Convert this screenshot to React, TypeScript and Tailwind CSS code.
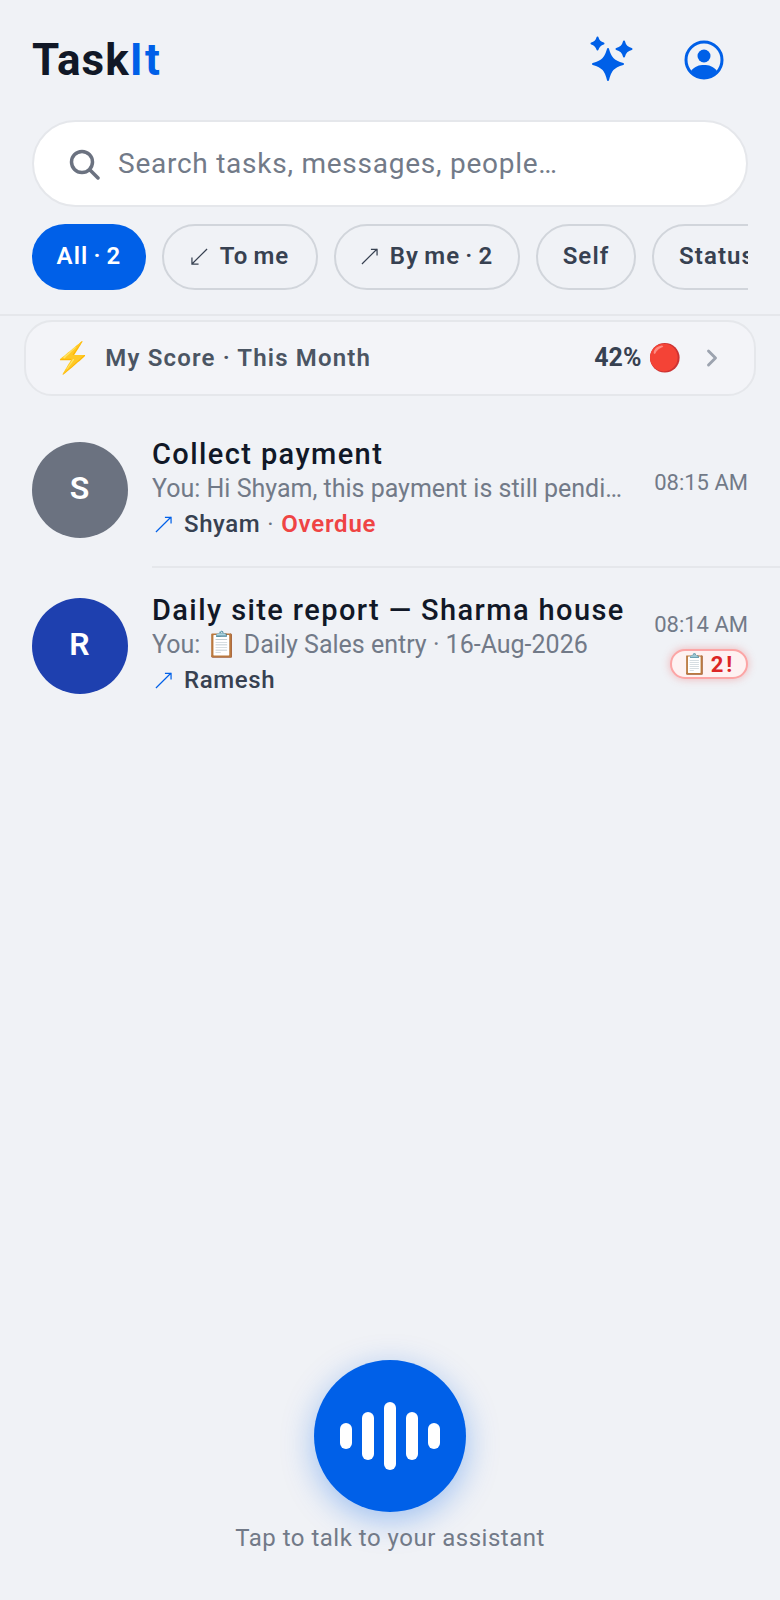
import { ChevronRight } from 'lucide-react'

const font = { fontFamily: 'Roboto, "Noto Color Emoji", sans-serif' }

const tabs = [
  { label: 'All · 2', width: 'w-[114px]', active: true },
  { label: 'To me', arrow: 'in', width: 'w-[156px]' },
  { label: 'By me · 2', arrow: 'out', width: 'w-[186px]' },
  { label: 'Self', width: 'w-[100px]' },
  { label: 'Status', width: 'w-[130px]' },
]

function Arrow({ dir, color }: { dir: string; color: string }) {
  return (
    <svg width="17" height="17" viewBox="0 0 18 18" fill="none" stroke={color} strokeWidth="1.300" className="shrink-0">
      {dir === 'out' ? <path d="M1 17 L17 1 M10.500 1.500 H17 V8" /> : <path d="M17 1 L1 17 M1 10 V17 H8" />}
    </svg>
  )
}

function Sparkles() {
  return (
    <svg width="48" height="48" viewBox="0 0 48 48" fill="#0060e8" stroke="#0060e8" strokeWidth="2" strokeLinejoin="round">
      <path d="M21 13 C23.500 22 26 25 36 28 C26 31 23.500 34 21 44 C18.500 34 16 31 6 28 C16 25 18.500 22 21 13 Z" />
      <path d="M10.500 1.500 C11.500 5 13 6.500 16.500 7.500 C13 8.500 11.500 10 10.500 13.500 C9.500 10 8 8.500 4.500 7.500 C8 6.500 9.500 5 10.500 1.500 Z" />
      <path d="M37 5.500 C38 10 40 12 44.500 13 C40 14 38 16 37 20.500 C36 16 34 14 29.500 13 C34 12 36 10 37 5.500 Z" />
    </svg>
  )
}

function Profile() {
  return (
    <svg width="40" height="40" viewBox="0 0 40 40">
      <circle cx="20" cy="20" r="18" fill="none" stroke="#0060e8" strokeWidth="3" />
      <circle cx="20" cy="16" r="6.500" fill="#0060e8" />
      <path d="M7 31 C11 26 15 25 20 25 C25 25 29 26 33 31 C30 35 25 38 20 38 C15 38 10 35 7 31 Z" fill="#0060e8" />
    </svg>
  )
}

function Row({ initial, color, title, preview, person, overdue, time, badge, last }: {
  initial: string
  color: string
  title: string
  preview: string
  person: string
  overdue?: boolean
  time: string
  badge?: boolean
  last?: boolean
}) {
  return (
    <div className="flex h-[156px] pl-8">
      <div className={`mt-[30px] flex h-[96px] w-[96px] shrink-0 items-center justify-center rounded-full pb-[4px] pr-[1px] text-[32px] font-semibold text-white ${color}`}>
        {initial}
      </div>
      <div className={`ml-6 flex min-w-0 flex-1 pr-8 pt-[23px] ${last ? '' : 'border-b-2 border-[#e5e7eb]'}`}>
        <div className="w-[473px] shrink-0">
          <div className="h-[38px] truncate text-[29px] leading-[38px] font-medium tracking-[1.4px] text-[#111827]">{title}</div>
          <div className="h-[32px] truncate text-[25px] leading-[32px] text-[#727a88]">{preview}</div>
          <div className="mt-[2px] flex h-[34px] items-center text-[24px] font-medium tracking-[0.6px] text-[#374151]">
            <span className="ml-[3px]">
              <Arrow dir="out" color="#0060e8" />
            </span>
            <span className="ml-[12px]">{person}</span>
            {overdue && <span className="ml-[7px] font-normal text-[#6b7280]">·</span>}
            {overdue && <span className="ml-[7px] font-semibold tracking-[0.8px] text-[#ef4444]">Overdue</span>}
          </div>
        </div>
        <div className="ml-auto flex flex-col items-end">
          <div className={`text-[22px] leading-[30px] text-[#727a88] ${badge ? 'mt-[19px]' : 'mt-[33px]'}`}>{time}</div>
          {badge && (
            <div className="mt-[9px] flex h-[30px] w-[78px] items-center justify-center rounded-full border-2 border-[#fca5a5] bg-[#fef2f2] text-[22px] font-bold tracking-[3px] text-[#dc2626] shadow-[0_0_8px_rgba(239,68,68,0.35)]">
              <span className="mr-[3px] text-[20px] tracking-[0]">📋</span>2!
            </div>
          )}
        </div>
      </div>
    </div>
  )
}

export default function App() {
  return (
    <div className="flex min-h-[1600px] flex-col overflow-hidden bg-[#f0f2f6]" style={font}>
      <header className="flex h-[120px] shrink-0 items-center justify-between pl-8 pr-[56px]">
        <div className="text-[44px] leading-none font-bold tracking-[1px] text-[#111827]">
          Task<span className="tracking-[2.500px] text-[#0060e8]">It</span>
        </div>
        <div className="flex items-center gap-[49px]">
          <Sparkles />
          <Profile />
        </div>
      </header>

      <div className="mx-8 flex h-[87px] shrink-0 items-center rounded-full border-2 border-[#e5e7eb] bg-white pl-[34px]">
        <svg width="32" height="32" viewBox="0 0 32 32" fill="none" stroke="#6b7280" strokeWidth="3.500" strokeLinecap="round">
          <circle cx="14" cy="14" r="10.500" />
          <path d="M22 22 L30 30" />
        </svg>
        <span className="ml-[18px] text-[28px] tracking-[0.750px] text-[#727a88]">Search tasks, messages, people…</span>
      </div>

      <div className="mx-8 mt-[17px] flex h-[66px] shrink-0 gap-4 overflow-hidden">
        {tabs.map((tab) => (
          <div
            key={tab.label}
            className={`flex h-[66px] shrink-0 items-center justify-center gap-[12px] rounded-full pb-[2px] text-[24px] font-semibold tracking-[1.100px] [word-spacing:-2px] ${tab.width} ${
              tab.active ? 'bg-[#0060e8] text-white' : 'border-2 border-[#d1d5db] text-[#374151]'
            }`}
          >
            {tab.arrow && <Arrow dir={tab.arrow} color="#374151" />}
            <span>{tab.label}</span>
          </div>
        ))}
      </div>

      <div className="mt-[24px] h-[2px] shrink-0 bg-[#e5e7eb]" />

      <div className="mx-6 mt-[4px] flex h-[76px] shrink-0 items-center rounded-[28px] border-2 border-[#e5e7eb] bg-[#f3f4f8] pl-[28px] pr-[28px]">
        <span className="text-[30px] leading-none">⚡</span>
        <span className="ml-[14px] text-[24px] font-semibold tracking-[1.150px] text-[#4b5563]">My Score · This Month</span>
        <span className="ml-auto text-[25px] font-bold text-[#374151]">42%</span>
        <span className="ml-[7px] text-[27px] leading-none">🔴</span>
        <ChevronRight className="ml-[16px]" size={28} color="#9ca3af" strokeWidth={2.500} />
      </div>

      <div className="mt-[16px]">
        <Row
          initial="S"
          color="bg-[#6b7280]"
          title="Collect payment"
          preview="You: Hi Shyam, this payment is still pending"
          person="Shyam"
          overdue
          time="08:15 AM"
        />
        <Row
          initial="R"
          color="bg-[#1e40af]"
          title="Daily site report — Sharma house"
          preview="You: 📋 Daily Sales entry · 16-Aug-2026"
          person="Ramesh"
          time="08:14 AM"
          badge
          last
        />
      </div>

      <div className="mt-auto flex flex-col items-center pb-[47px]">
        <div className="flex h-[152px] w-[152px] items-center justify-center gap-[10px] rounded-full bg-[#0060e8] shadow-[0_8px_32px_rgba(0,96,232,0.35)]">
          <div className="h-[26px] w-3 rounded-full bg-white" />
          <div className="h-[48px] w-3 rounded-full bg-white" />
          <div className="h-[68px] w-3 rounded-full bg-white" />
          <div className="h-[48px] w-3 rounded-full bg-white" />
          <div className="h-[26px] w-3 rounded-full bg-white" />
        </div>
        <div className="mt-[11px] text-[24px] leading-[30px] tracking-[0.5px] text-[#727a88]">Tap to talk to your assistant</div>
      </div>
    </div>
  )
}
